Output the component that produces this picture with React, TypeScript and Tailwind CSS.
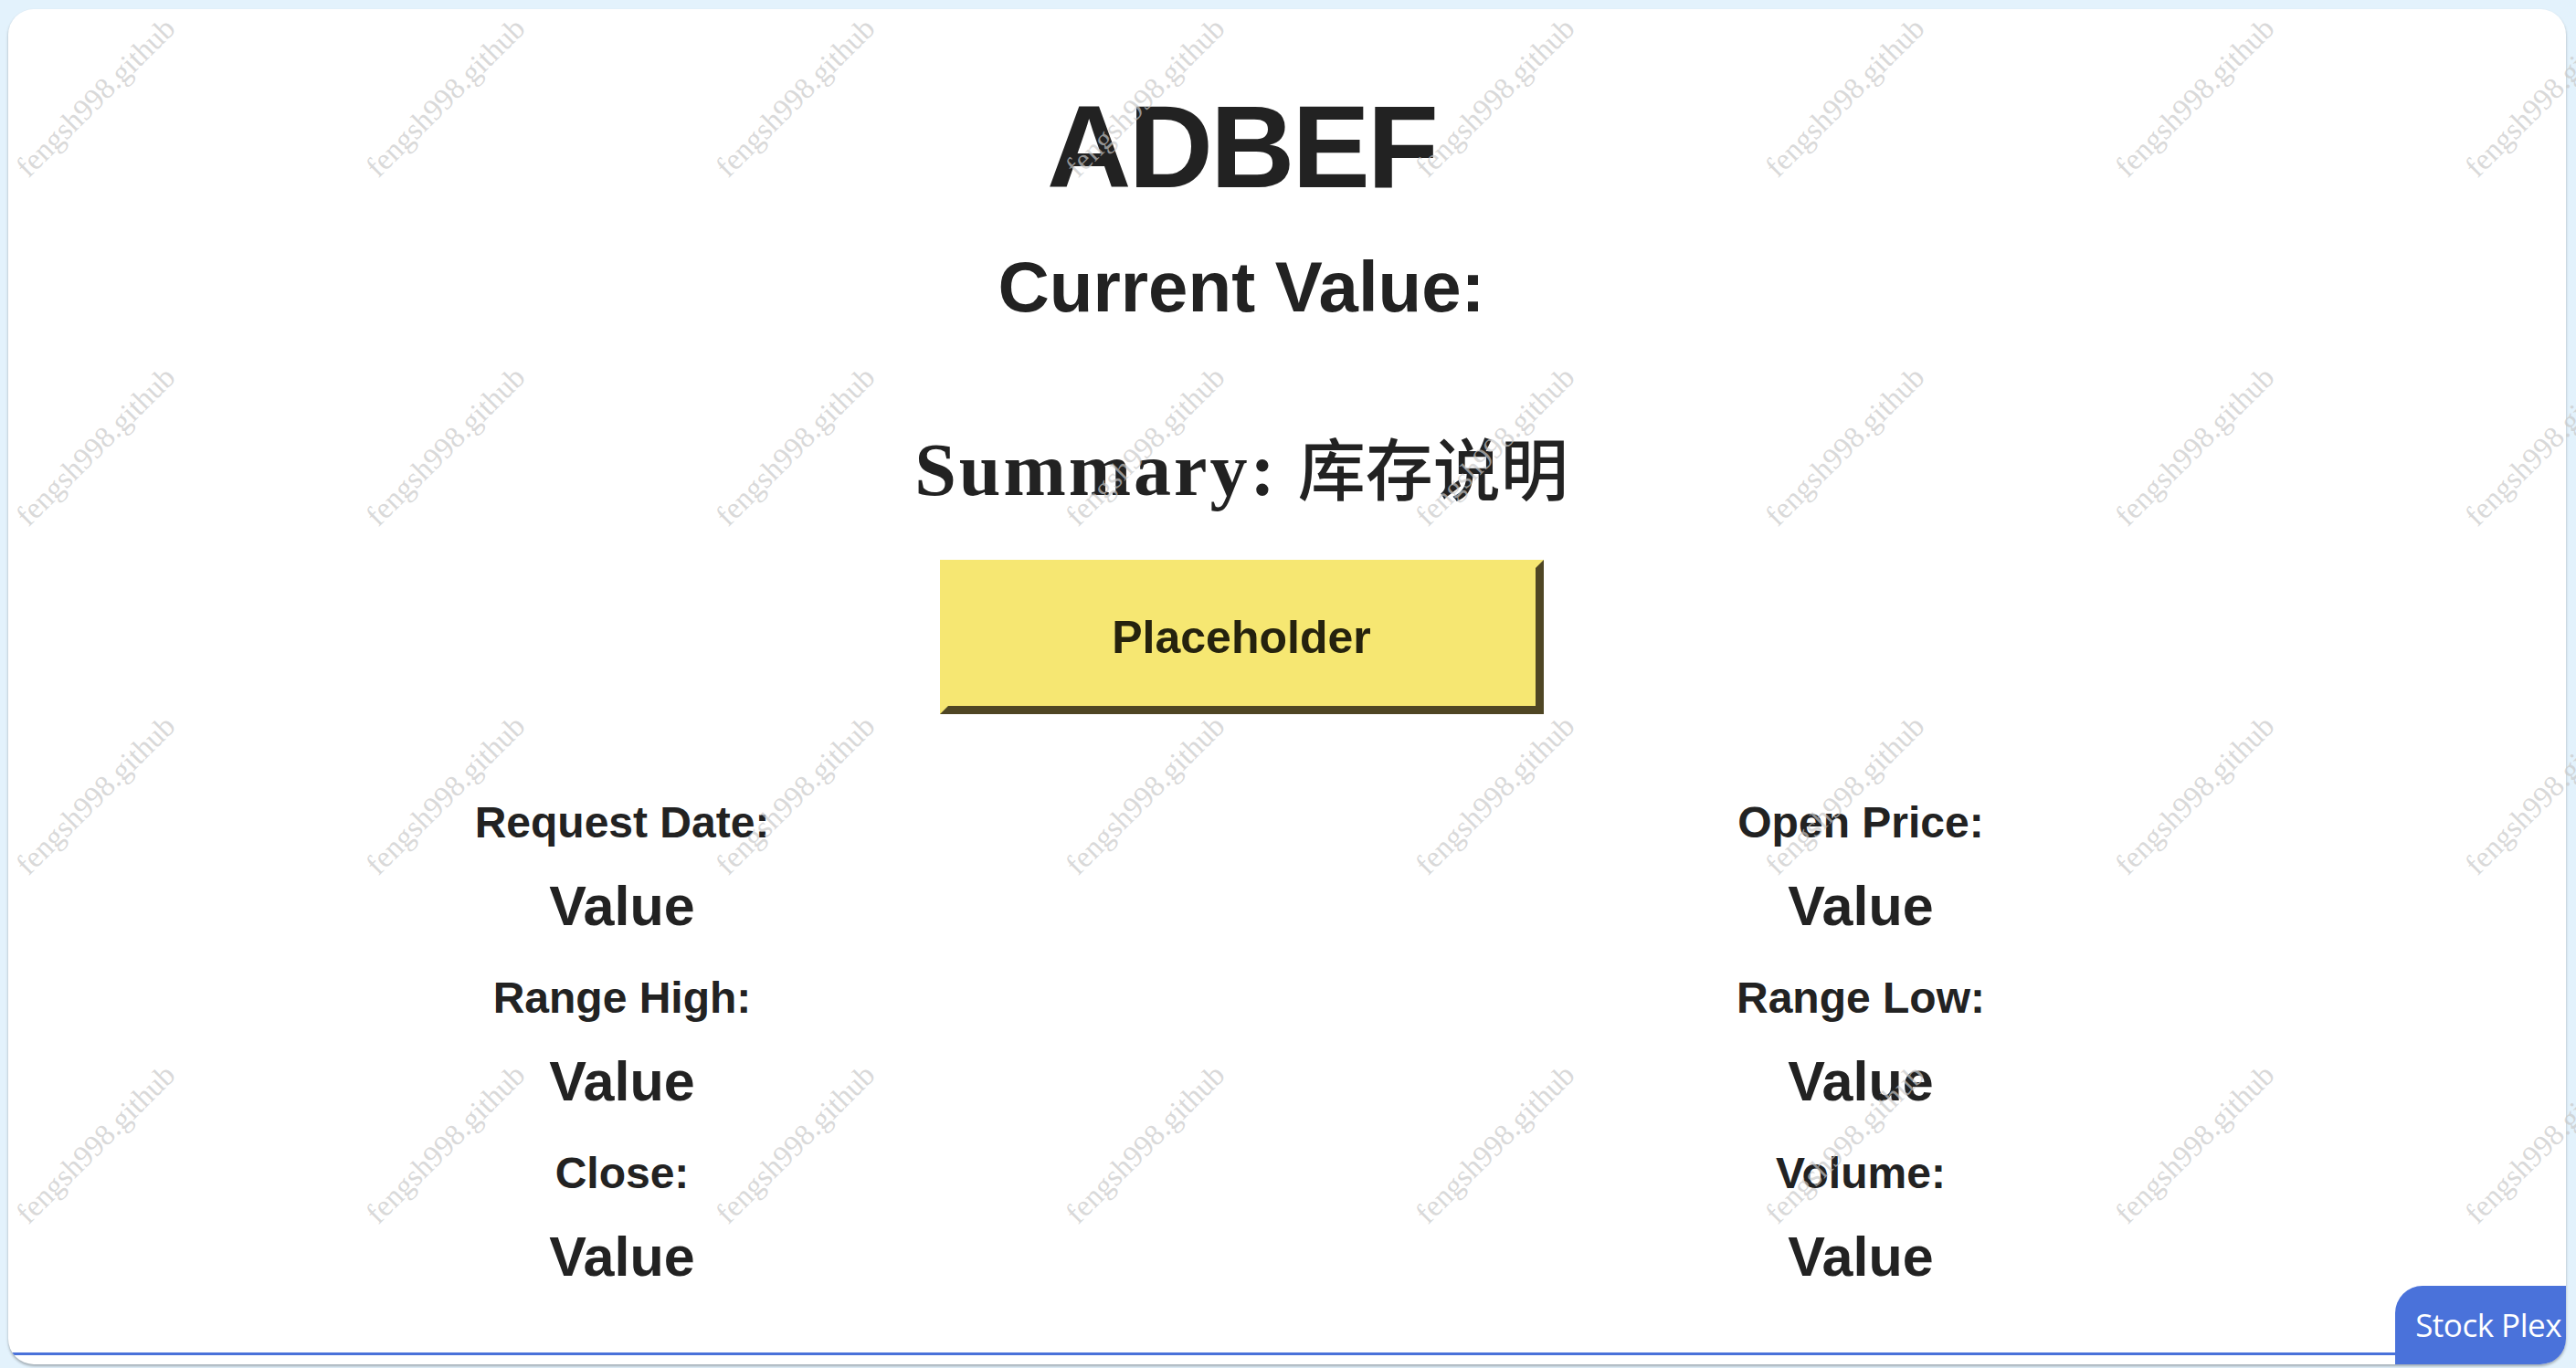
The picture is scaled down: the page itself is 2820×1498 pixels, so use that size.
import React from "react";

const COLS = [105, 488, 871, 1254, 1637, 2020, 2403, 2786];
const ROWS = [107, 489, 871, 1253];

const LEFT = [
  { label: "Request Date:", value: "Value" },
  { label: "Range High:", value: "Value" },
  { label: "Close:", value: "Value" },
];
const RIGHT = [
  { label: "Open Price:", value: "Value" },
  { label: "Range Low:", value: "Value" },
  { label: "Volume:", value: "Value" },
];

function Column({ items }: { items: { label: string; value: string }[] }) {
  return (
    <div className="flex flex-col items-center">
      {items.map((it, i) => (
        <div key={i} className={`flex flex-col items-center ${i > 0 ? "mt-[46px]" : ""}`}>
          <div className="text-[48px] leading-none font-bold">{it.label}</div>
          <div className="mt-[37px] text-[61px] leading-none font-bold">{it.value}</div>
        </div>
      ))}
    </div>
  );
}

export default function App() {
  return (
    <div className="relative w-[2820px] h-[1498px] overflow-hidden bg-[#e3f2fc] pt-[10px] pl-[9px] pr-[11px] pb-[4px] font-['Liberation_Sans',Arial,sans-serif] text-[#222222]">
      <div className="h-full w-full bg-white rounded-[28px] overflow-hidden flex flex-col shadow-[0_2px_3px_rgba(0,0,0,0.3)]">
        <div className="w-[2712px] -ml-[6px] flex flex-col items-center">
          <h1 className="mt-[87px] text-[128px] leading-none font-bold tracking-[-3px]">ADBEF</h1>
          <h2 className="mt-[50px] text-[78px] leading-none font-bold">Current Value:</h2>
          <div className="mt-[120px] h-[80px] flex items-baseline">
            <span className="font-['Liberation_Serif','Times_New_Roman',serif] text-[82px] leading-none font-bold tracking-[3px]">
              Summary:
            </span>
            <span className="ml-[22px] font-['Noto_Sans_CJK_SC',sans-serif] text-[74px] leading-none font-medium">
              库存说明
            </span>
          </div>
          <button className="mt-[60px] w-[661px] h-[169px] bg-[#f6e772] border-[9px] border-t-[#f6e772] border-l-[#f6e772] border-r-[#4f4624] border-b-[#4f4624] text-[50px] leading-none font-bold text-[#25220e] flex items-center justify-center">
            Placeholder
          </button>
          <div className="mt-[95px] w-full grid grid-cols-2">
            <Column items={LEFT} />
            <Column items={RIGHT} />
          </div>
        </div>
        <div className="flex-1" />
        <div className="flex items-end h-[86px]">
          <div className="flex-1 h-[3px] bg-[#4a72da] mb-[10px]" />
          <div className="w-[187px] h-[86px] bg-[#4a72da] rounded-tl-[30px] flex items-start justify-end pr-[5px] pt-[25px]">
            <span className="font-['Open_Sans',sans-serif] text-[35px] leading-none font-medium text-white whitespace-nowrap tracking-[-0.5px]">
              Stock Plex
            </span>
          </div>
        </div>
      </div>
      <div className="pointer-events-none absolute inset-0">
        {ROWS.map((y) =>
          COLS.map((x) => (
            <span
              key={`${x}-${y}`}
              className="absolute -translate-x-1/2 -translate-y-1/2 -rotate-45 whitespace-nowrap font-['Liberation_Serif','Times_New_Roman',serif] text-[33px] leading-none text-[rgba(200,200,200,0.7)]"
              style={{ left: x, top: y }}
            >
              fengsh998.github
            </span>
          ))
        )}
      </div>
    </div>
  );
}
